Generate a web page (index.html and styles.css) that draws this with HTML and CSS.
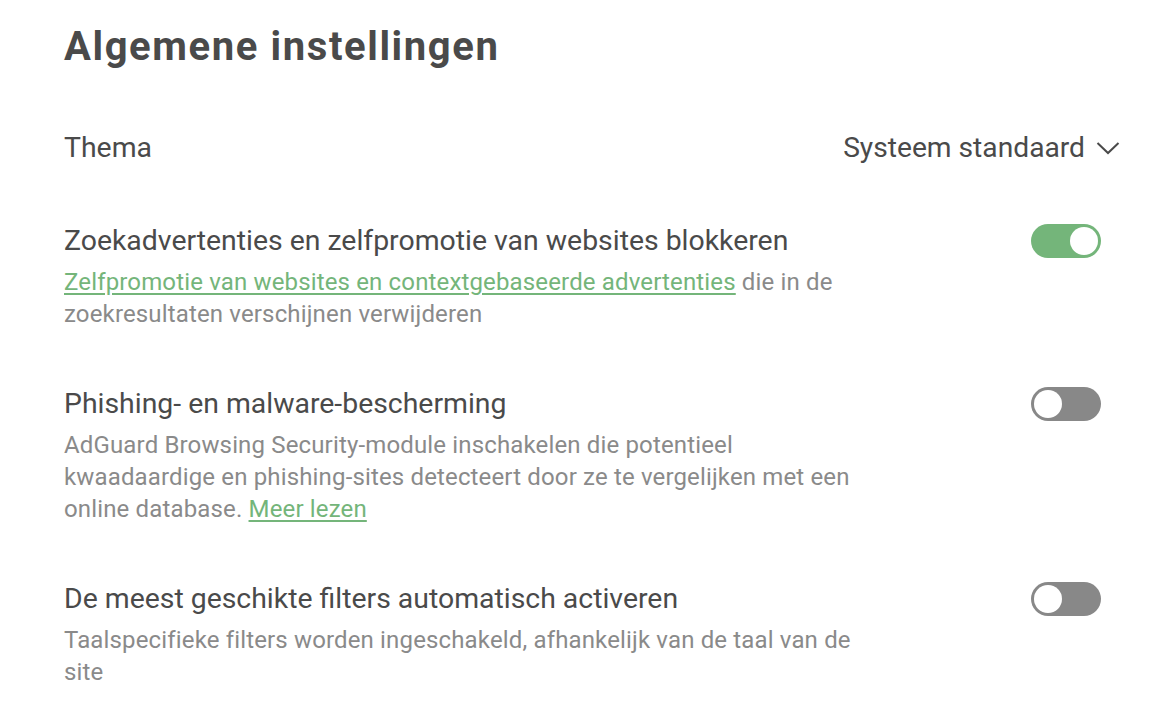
FILE: index.html
```html
<!DOCTYPE html>
<html lang="nl">
<head>
<meta charset="utf-8">
<link rel="stylesheet" href="styles.css">
</head>
<body>
<main class="page">
  <h1 class="title">Algemene instellingen</h1>

  <div class="row row-theme">
    <div class="label">Thema</div>
    <div class="select">Systeem standaard
      <svg class="chev" width="24" height="14" viewBox="0 0 24 14"><path d="M1.5 2 L12 12 L22.5 2" fill="none" stroke="#4a4a4a" stroke-width="2"/></svg>
    </div>
  </div>

  <div class="row setting">
    <div class="text">
      <div class="label">Zoekadvertenties en zelfpromotie van websites blokkeren</div>
      <div class="desc"><a class="link" href="#">Zelfpromotie van websites en contextgebaseerde advertenties</a> die in de zoekresultaten verschijnen verwijderen</div>
    </div>
    <div class="toggle on"><span class="knob"></span></div>
  </div>

  <div class="row setting">
    <div class="text">
      <div class="label">Phishing- en malware-bescherming</div>
      <div class="desc">AdGuard Browsing Security-module inschakelen die potentieel kwaadaardige en phishing-sites detecteert door ze te vergelijken met een online database. <a class="link" href="#">Meer lezen</a></div>
    </div>
    <div class="toggle"><span class="knob"></span></div>
  </div>

  <div class="row setting">
    <div class="text">
      <div class="label">De meest geschikte filters automatisch activeren</div>
      <div class="desc">Taalspecifieke filters worden ingeschakeld, afhankelijk van de taal van de site</div>
    </div>
    <div class="toggle"><span class="knob"></span></div>
  </div>
</main>
</body>
</html>
```
FILE: styles.css
```css
html, body {
  margin: 0;
  padding: 0;
  background: #fff;
}
body {
  font-family: Roboto, "Liberation Sans", sans-serif;
  color: #4a4a4a;
}
.page {
  padding: 22px 50px 0 64px;
}
.title {
  margin: 0;
  font-size: 40px;
  font-weight: 700;
  letter-spacing: 1.6px;
  line-height: 50px;
  color: #4a4a4a;
}
.row {
  display: flex;
  justify-content: space-between;
}
.row-theme {
  margin-top: 59px;
  align-items: center;
}
.label {
  font-size: 28.4px;
  line-height: 34px;
  color: #4a4a4a;
}
.select {
  display: flex;
  align-items: center;
  gap: 11px;
  font-size: 28.2px;
  line-height: 34px;
  color: #4a4a4a;
}
.chev {
  display: block;
}
.setting {
  align-items: flex-start;
  padding-right: 19px;
}
.row-theme + .setting {
  margin-top: 59px;
}
.setting + .setting {
  margin-top: 57px;
}
.text {
  max-width: 800px;
}
.desc {
  margin-top: 8px;
  font-size: 24px;
  letter-spacing: 0.15px;
  line-height: 32px;
  color: #8a8a8a;
}
.link {
  color: #74b57a;
  text-decoration: underline;
  text-underline-offset: 3px;
}
.toggle {
  flex: none;
  width: 70px;
  height: 34px;
  border-radius: 17px;
  background: #888;
  display: flex;
  align-items: center;
  padding: 0 3px;
  box-sizing: border-box;
}
.toggle.on {
  background: #74b57a;
  justify-content: flex-end;
}
.knob {
  width: 28px;
  height: 28px;
  border-radius: 50%;
  background: #fff;
}
```
